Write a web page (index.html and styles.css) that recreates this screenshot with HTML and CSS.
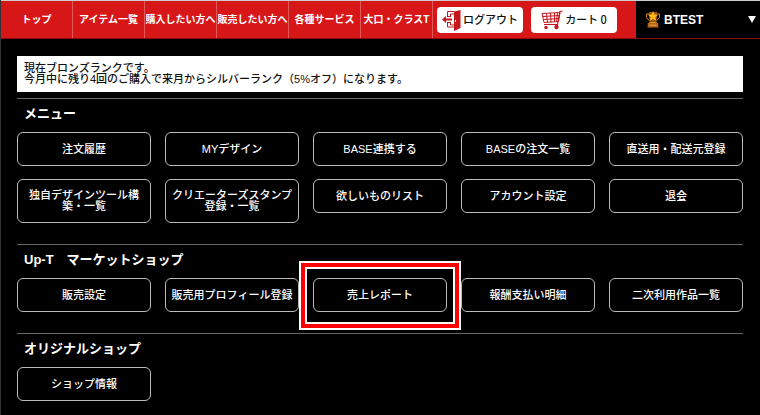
FILE: index.html
```
<!DOCTYPE html>
<html lang="ja">

<head>
    <meta charset="utf-8">
    <title>マイページ</title>
    <link rel="stylesheet" href="styles.css">
</head>

<body>
    <header>
        <nav>
            <a href="#">トップ</a>
            <a href="#">アイテム一覧</a>
            <a href="#">購入したい方へ</a>
            <a href="#">販売したい方へ</a>
            <a href="#">各種サービス</a>
            <a href="#">大口・クラスT</a>
        </nav>
        <div class="tools">
            <a class="tool" href="#">
                <svg width="19" height="22" viewBox="0 0 19 22" fill="none" stroke="#c4161c">
                    <path d="M5.500 7.500V2.500H12M5.500 13.500v4.500H12" />
                    <path d="M8.500 7.500V5H12M8.500 13.500V16H12" />
                    <path d="M5 7.500h4M5 13.500h4" />
                    <path d="M3 10.500h7" stroke-width="2" />
                    <path d="M0 10.500 4 7v7z" fill="#c4161c" stroke="none" />
                    <path d="M12 2.500 18.500 1v18L12 22z" fill="#c4161c" stroke="none" />
                    <path d="M13.500 11v2" stroke="#fff" />
                </svg>
                ログアウト
            </a>
            <a class="tool" href="#">
                <svg width="22" height="20" viewBox="0 0 22 20" fill="none" stroke="#c4161c">
                    <path d="M1 3.500 19 2.500 17.500 11.500 3 12.500z" />
                    <path d="M2 6.500 18.500 5.500M2.500 9.500 18 8.500M5.500 3.500l1 9M9.500 3l.5 9.500M13.500 3v9M16.500 2.500l-1 9" />
                    <path d="M21.500 1 19 1.500 16.500 14.500H3" stroke-width="1.200" />
                    <circle cx="5" cy="17.500" r="1.700" fill="#c4161c" stroke="none" />
                    <circle cx="15.500" cy="17" r="2.200" fill="#c4161c" stroke="none" />
                </svg>
                カート 0
            </a>
        </div>
        <button class="user" type="button">
            <svg width="14" height="17" viewBox="0 0 14 17">
                <path d="M3 3H.5v3.500L4 10.500M11 3h2.500v3.500L10 10.500" fill="none" stroke="#d98a1c" />
                <path d="M3 1h8v5.500Q10.500 10 8.500 10.500H5.500Q3.500 10 3 6.500z" fill="#9b5208" />
                <path d="M7 0l1.500 3.500 3.500.3-2.700 2.400.9 3.600L7 7.900 3.800 9.800l.9-3.600L2 3.800l3.500-.3z" fill="#ffb81c" />
                <path d="M4 10.500h6l1 1.500H3z" fill="#e08a1a" />
                <path d="M2 12h10l.5 4.500h-11z" fill="#b9650f" />
                <path d="M3.500 14.200h7" stroke="#e9a24a" />
            </svg>
            BTEST
            <svg class="arrow" width="8" height="7" viewBox="0 0 8 7">
                <path d="M0 0h8L4 7z" fill="#fff" />
            </svg>
        </button>
    </header>

    <main>
        <p class="notice">現在ブロンズランクです。<br>今月中に残り4回のご購入で来月からシルバーランク（5%オフ）になります。</p>

        <section>
            <h2>メニュー</h2>
            <div class="menu">
                <a href="#">注文履歴</a>
                <a href="#">MYデザイン</a>
                <a href="#">BASE連携する</a>
                <a href="#">BASEの注文一覧</a>
                <a href="#">直送用・配送元登録</a>
                <a href="#">独自デザインツール構築・一覧</a>
                <a href="#">クリエーターズスタンプ登録・一覧</a>
                <a href="#">欲しいものリスト</a>
                <a href="#">アカウント設定</a>
                <a href="#">退会</a>
            </div>
        </section>

        <section>
            <h2>Up-T　マーケットショップ</h2>
            <div class="menu">
                <a href="#">販売設定</a>
                <a href="#">販売用プロフィール登録</a>
                <a class="marked" href="#">売上レポート</a>
                <a href="#">報酬支払い明細</a>
                <a href="#">二次利用作品一覧</a>
            </div>
        </section>

        <section>
            <h2>オリジナルショップ</h2>
            <div class="menu">
                <a href="#">ショップ情報</a>
            </div>
        </section>
    </main>
</body>

</html>
```
FILE: styles.css
```
* {
    box-sizing: border-box;
}

body {
    margin: 0;
    min-height: 100vh;
    background-color: #000;
    border-left: 1px solid #333;
    color: #fff;
    font-family: "Liberation Sans", "Noto Sans CJK JP", sans-serif;
    font-size: 11px;
    font-weight: 500;
    line-height: 11px;
}

a {
    color: inherit;
    text-decoration: none;
}

header {
    display: flex;
    height: 39px;
    border-top: 1px solid #ccc;
    border-bottom: 1px solid #8c0a10;
    background-color: #d71618;
}

nav {
    display: flex;
    flex: 1;
}

nav a {
    display: flex;
    flex: 1 1 0;
    align-items: center;
    justify-content: center;
    border-right: 1px solid #e4585a;
    font-size: 10px;
    font-weight: bold;
    white-space: nowrap;
}

.tools {
    display: flex;
    align-items: center;
    gap: 8px;
    padding: 0 19px 0 4px;
}

.tool {
    display: flex;
    align-items: center;
    justify-content: center;
    gap: 2px;
    width: 86px;
    height: 26px;
    border-radius: 4px;
    background-color: #fff;
    color: #111;
    font-family: "Noto Sans CJK JP", sans-serif;
    white-space: nowrap;
}

.user {
    display: flex;
    align-items: center;
    gap: 4px;
    width: 124px;
    padding: 0 4px 0 10px;
    border: 0;
    background-color: #000;
    color: #fff;
    font: bold 12px "Liberation Sans", sans-serif;
}

.arrow {
    margin-left: auto;
}

main {
    padding: 17px 17px 14px 16px;
}

.notice {
    margin: 0 0 6px;
    padding: 7px;
    background-color: #fff;
    color: #111;
}

section {
    margin-bottom: 21px;
    border-top: 1px solid #666;
}

section:last-child {
    margin-bottom: 0;
}

h2 {
    margin: 0;
    padding: 0 7px 4px;
    font-size: 13px;
    line-height: 29px;
}

.menu {
    display: grid;
    grid-template-columns: repeat(5, 1fr);
    align-items: start;
    gap: 13px 14px;
}

.menu a {
    display: flex;
    position: relative;
    align-items: center;
    justify-content: center;
    min-height: 34px;
    padding: 10px 5px;
    border: 1px solid #bbb;
    border-radius: 6px;
    text-align: center;
}

/* frame drawn over the neighbouring buttons */
.menu .marked::after {
    content: "";
    position: absolute;
    z-index: 1;
    inset: -16px -13px -17px;
    border: 4px solid #f00;
    outline: 2px solid #fff;
    box-shadow: inset 0 0 0 2px #fff;
}
```
